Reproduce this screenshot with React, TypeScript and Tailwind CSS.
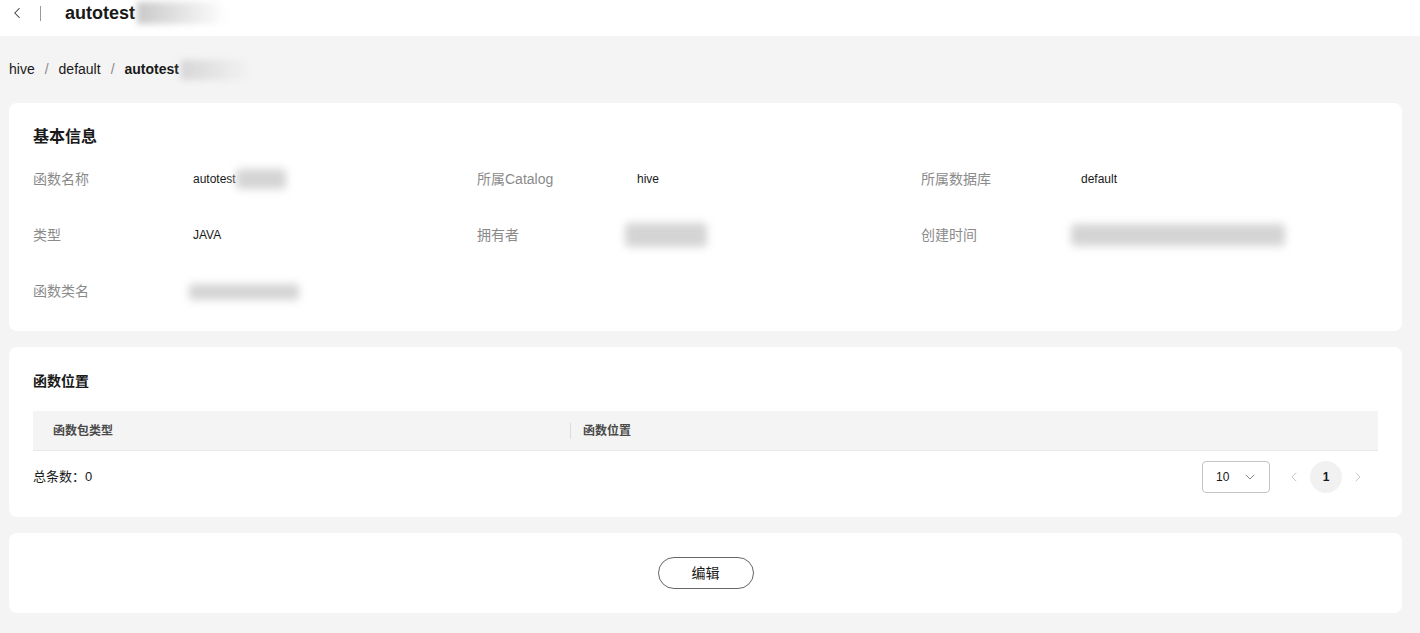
import { ChevronLeft, ChevronRight, ChevronDown } from "lucide-react";

const font = { fontFamily: '"Liberation Sans", "Noto Sans CJK SC", sans-serif' };

function Blur({ w, h }: { w: number; h: number }) {
  return (
    <span
      className="inline-block align-middle rounded-sm bg-[#d4d4d4] blur-[4px]"
      style={{ width: w, height: h }}
    />
  );
}

function Field({ label, children }: { label: string; children: React.ReactNode }) {
  return (
    <div className="flex items-center h-[20px]">
      <div className="w-[160px] shrink-0 text-[14px] text-[#8a8a8a]">{label}</div>
      <div className="flex items-center text-[12px] text-[#191919]">{children}</div>
    </div>
  );
}

export default function App() {
  return (
    <div className="min-h-screen bg-[#f4f4f4]" style={font}>
      {/* top bar */}
      <div className="h-[36px] bg-white flex items-center pb-[10px]">
        <ChevronLeft className="ml-[8px] w-[18px] h-[18px] text-[#333]" strokeWidth={1.4} />
        <div className="ml-[14px] w-px h-[15px] bg-[#999]" />
        <div className="ml-[24px] flex items-center">
          <span className="text-[18px] font-bold text-[#191919]">autotest</span>
          <span className="ml-[2px] w-[90px] h-[22px] bg-gradient-to-r from-[#c9c9c9] to-transparent blur-[3px]" />
        </div>
      </div>

      {/* breadcrumb */}
      <div className="h-[67px] flex items-center pl-[9px] text-[14px] text-[#191919]">
        <span>hive</span>
        <span className="mx-[10px] text-[#8a8a8a]">/</span>
        <span>default</span>
        <span className="mx-[10px] text-[#8a8a8a]">/</span>
        <span className="font-bold">autotest</span>
        <span className="ml-[2px] w-[70px] h-[20px] bg-gradient-to-r from-[#d6d6d6] to-transparent blur-[3px]" />
      </div>

      <div className="ml-[9px] mr-[18px] flex flex-col gap-[16px] pb-[21px]">
        {/* basic info */}
        <div className="bg-white rounded-[8px] px-[24px] pt-[24px] pb-[30px]">
          <div className="h-[20px] flex items-center text-[16px] font-bold text-[#191919]">基本信息</div>
          <div className="mt-[22px] grid grid-cols-[444px_444px_1fr] gap-y-[36px]">
            <Field label="函数名称">
              <span>autotest</span>
              <Blur w={50} h={20} />
            </Field>
            <Field label="所属Catalog">hive</Field>
            <Field label="所属数据库">default</Field>
            <Field label="类型">JAVA</Field>
            <Field label="拥有者">
              <span className="-ml-[12px]">
                <Blur w={82} h={24} />
              </span>
            </Field>
            <Field label="创建时间">
              <span className="-ml-[10px]">
                <Blur w={214} h={22} />
              </span>
            </Field>
            <Field label="函数类名">
              <span className="-ml-[4px]">
                <Blur w={110} h={16} />
              </span>
            </Field>
          </div>
        </div>

        {/* location */}
        <div className="bg-white rounded-[8px] px-[24px] pt-[24px] pb-[24px]">
          <div className="h-[20px] flex items-center text-[14px] font-bold text-[#191919]">函数位置</div>
          <div className="mt-[20px] h-[40px] bg-[#f4f4f4] border-b border-[#e9e9e9] flex items-center text-[12px] font-bold text-[#4a4a4a]">
            <div className="w-[40%] pl-[20px] flex items-center justify-between">
              <span>函数包类型</span>
              <span className="w-px h-[16px] bg-[#dcdcdc]" />
            </div>
            <div className="pl-[12px]">函数位置</div>
          </div>
          <div className="mt-[10px] h-[32px] flex items-center justify-between">
            <span className="text-[13px] text-[#191919]">总条数：0</span>
            <div className="flex items-center">
              <div className="w-[68px] h-[32px] border border-[#c4c4c4] rounded-[4px] flex items-center justify-between pl-[13px] pr-[11px] text-[12px] text-[#191919]">
                <span>10</span>
                <ChevronDown className="w-[16px] h-[16px] text-[#808080]" strokeWidth={1.4} />
              </div>
              <ChevronLeft className="ml-[16px] w-[16px] h-[16px] text-[#c2c2c2]" strokeWidth={1.4} />
              <div className="ml-[8px] w-[32px] h-[32px] rounded-full bg-[#f1f1f1] flex items-center justify-center text-[12px] font-bold text-[#191919]">
                1
              </div>
              <ChevronRight className="ml-[8px] w-[16px] h-[16px] text-[#c2c2c2]" strokeWidth={1.4} />
              <div className="w-[12px]" />
            </div>
          </div>
        </div>

        {/* actions */}
        <div className="bg-white rounded-[8px] pt-[24px] pb-[24px] flex justify-center">
          <button className="w-[96px] h-[32px] rounded-full border border-[#666] text-[14px] text-[#191919] flex items-center justify-center">
            编辑
          </button>
        </div>
      </div>
    </div>
  );
}
